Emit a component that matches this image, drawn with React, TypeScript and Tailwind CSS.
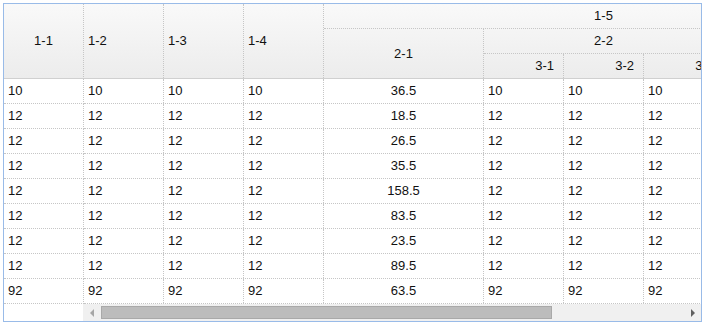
const rows = [
  { v: '10', c: '36.5' },
  { v: '12', c: '18.5' },
  { v: '12', c: '26.5' },
  { v: '12', c: '35.5' },
  { v: '12', c: '158.5' },
  { v: '12', c: '83.5' },
  { v: '12', c: '23.5' },
  { v: '12', c: '89.5' },
  { v: '92', c: '63.5' },
];

const dot = 'border-dotted border-[#c6c6c6]';

export default function App() {
  return (
    <div className="p-[3px] font-['Liberation_Sans',Arial,sans-serif] text-[13px] text-[#111]">
      <div className="w-[699px] h-[319px] border border-[#99bbe8] bg-white flex flex-col overflow-hidden">
        <div className="flex flex-1 min-h-0">
          {/* locked column */}
          <div className="w-[80px] shrink-0">
            <div className={`h-[75px] flex items-center justify-center border-b border-b-[#d0d0d0] border-r ${dot} bg-linear-to-b from-[#f9f9f9] to-[#ececec]`} style={{ borderBottomStyle: 'solid' }}>
              1-1
            </div>
            {rows.map((r, i) => (
              <div key={i} className={`h-[25px] flex items-center pl-[4px] border-r border-b ${dot}`}>
                {r.v}
              </div>
            ))}
          </div>

          {/* scrolling part, wider than the view */}
          <div className="flex-1 overflow-hidden">
            <div className="w-[800px]">
              <div className="grid grid-cols-[80px_80px_80px_160px_80px_80px_80px_80px_80px] grid-rows-[25px_25px_24px] border-b border-[#d0d0d0] bg-linear-to-b from-[#f9f9f9] to-[#ececec]">
                <div className={`row-span-3 flex items-center pl-[4px] border-r ${dot}`}>1-2</div>
                <div className={`row-span-3 flex items-center pl-[4px] border-r ${dot}`}>1-3</div>
                <div className={`row-span-3 flex items-center pl-[4px] border-r ${dot}`}>1-4</div>
                <div className={`col-span-6 flex items-center justify-center border-r border-b ${dot}`}>1-5</div>
                <div className={`row-span-2 flex items-center justify-center border-r ${dot}`}>2-1</div>
                <div className={`col-span-3 flex items-center justify-center border-r border-b ${dot}`}>2-2</div>
                <div className={`col-span-2 border-r border-b ${dot}`} />
                {['3-1', '3-2', '3-3', '', ''].map((h, i) => (
                  <div key={i} className={`flex items-center justify-end pr-[9px] border-r ${dot}`}>
                    {h}
                  </div>
                ))}
              </div>
              {rows.map((r, i) => (
                <div key={i} className={`h-[25px] flex border-b ${dot}`}>
                  {[r.v, r.v, r.v].map((v, j) => (
                    <div key={j} className={`w-[80px] flex items-center pl-[4px] border-r ${dot}`}>{v}</div>
                  ))}
                  <div className={`w-[160px] flex items-center justify-center border-r ${dot}`}>{r.c}</div>
                  {[r.v, r.v, r.v, '', ''].map((v, j) => (
                    <div key={j} className={`w-[80px] flex items-center pl-[4px] border-r ${dot}`}>{v}</div>
                  ))}
                </div>
              ))}
            </div>
          </div>
        </div>

        {/* horizontal scrollbar */}
        <div className="h-[17px] flex shrink-0">
          <div className="w-[79px] bg-white" />
          <div className="flex-1 flex items-center bg-[#f0f0f0]">
            <div className="w-[17px] h-full flex items-center justify-center">
              <div className="w-0 h-0 border-y-[4px] border-y-transparent border-r-[4px] border-r-[#a6a6a6]" />
            </div>
            <div className="ml-[1px] w-[451px] h-[13px] bg-[#bcbcbc] border border-[#a9a9a9]" />
            <div className="flex-1" />
            <div className="w-[17px] h-full flex items-center justify-center">
              <div className="w-0 h-0 border-y-[4px] border-y-transparent border-l-[4px] border-l-[#606060]" />
            </div>
          </div>
        </div>
      </div>
    </div>
  );
}
